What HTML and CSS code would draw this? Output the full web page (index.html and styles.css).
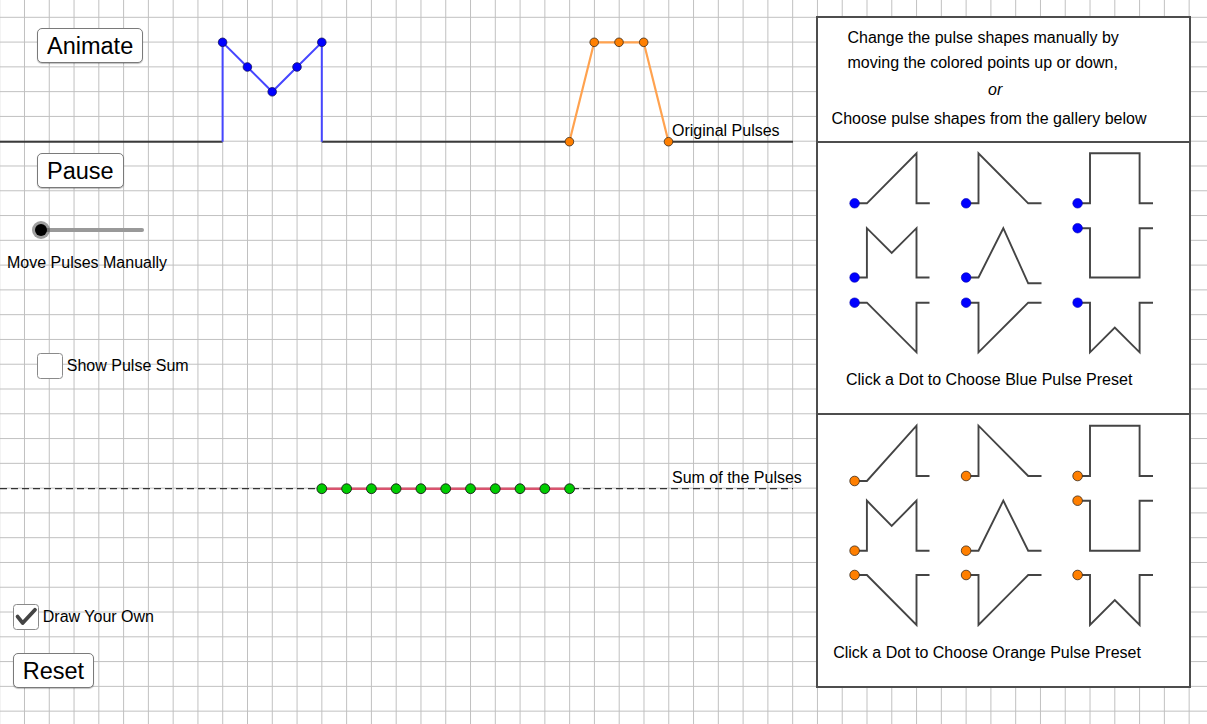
FILE: index.html
```html
<!DOCTYPE html>
<html lang="en">
<head>
<meta charset="utf-8">
<title>Pulse Superposition</title>
<link rel="stylesheet" href="styles.css">
</head>
<body>
<div class="applet">
  <svg class="canvas" width="1207" height="724" viewBox="0 0 1207 724">
    <defs>
      <pattern id="grid" width="24.78" height="24.78" patternUnits="userSpaceOnUse" x="-12.69" y="4.91">
        <path d="M12.39 0V24.78M0 12.39H24.78" stroke="#c0c0c0" stroke-width="1" fill="none"/>
      </pattern>
    </defs>
    <rect x="0" y="0" width="1207" height="724" fill="#fff"/>
    <rect x="0" y="0" width="1207" height="724" fill="url(#grid)"/>

    <!-- original pulses axis -->
    <path class="axis" d="M0 141.7H222.6M321.8 141.7H569.4M668.5 141.7H793"/>
    <polyline class="blue-line" points="222.6,141.7 222.6,42.3 247.4,67 272.2,91.8 297,67 321.8,42.3 321.8,141.7"/>
    <polyline class="orange-line" points="569.4,141.7 594.2,42.3 619,42.3 643.7,42.3 668.5,141.7"/>
    <g class="blue-dot">
      <circle cx="222.6" cy="42.3" r="4.3"/>
      <circle cx="247.4" cy="67" r="4.3"/>
      <circle cx="272.2" cy="91.8" r="4.3"/>
      <circle cx="297" cy="67" r="4.3"/>
      <circle cx="321.8" cy="42.3" r="4.3"/>
    </g>
    <g class="orange-dot">
      <circle cx="569.4" cy="141.7" r="4.3"/>
      <circle cx="594.2" cy="42.3" r="4.3"/>
      <circle cx="619" cy="42.3" r="4.3"/>
      <circle cx="643.7" cy="42.3" r="4.3"/>
      <circle cx="668.5" cy="141.7" r="4.3"/>
    </g>
    <text class="label" x="672" y="136">Original Pulses</text>

    <!-- sum of pulses -->
    <path class="dashed" d="M0 488.7H793"/>
    <path class="sum-line" d="M321.8 488.7H569.6"/>
    <g class="green-dot">
      <circle cx="321.8" cy="488.7" r="4.9"/>
      <circle cx="346.6" cy="488.7" r="4.9"/>
      <circle cx="371.4" cy="488.7" r="4.9"/>
      <circle cx="396.1" cy="488.7" r="4.9"/>
      <circle cx="420.9" cy="488.7" r="4.9"/>
      <circle cx="445.7" cy="488.7" r="4.9"/>
      <circle cx="470.5" cy="488.7" r="4.9"/>
      <circle cx="495.3" cy="488.7" r="4.9"/>
      <circle cx="520" cy="488.7" r="4.9"/>
      <circle cx="544.8" cy="488.7" r="4.9"/>
      <circle cx="569.6" cy="488.7" r="4.9"/>
    </g>
    <text class="label" x="672" y="482.7">Sum of the Pulses</text>
  </svg>

  <div class="controls">
    <button class="btn btn-animate" type="button">Animate</button>
    <button class="btn btn-pause" type="button">Pause</button>
    <div class="slider"><span class="track"></span><span class="knob"></span></div>
    <div class="slider-label">Move Pulses Manually</div>
    <label class="check check-sum"><span class="box"></span>Show Pulse Sum</label>
    <label class="check check-draw"><span class="box"><svg width="24" height="24" viewBox="0 0 24 24"><path d="M3.6 11.6L8.7 18L21 4.8" fill="none" stroke="#444" stroke-width="3.8" stroke-linecap="round" stroke-linejoin="round"/></svg></span>Draw Your Own</label>
    <button class="btn btn-reset" type="button">Reset</button>
  </div>

  <aside class="panel">
    <section class="intro">
      <p class="line1">Change the pulse shapes manually by</p>
      <p class="line2">moving the colored points up or down,</p>
      <p class="line3"><em>or</em></p>
      <p class="line4">Choose pulse shapes from the gallery below</p>
    </section>

    <section class="preset preset-blue">
      <svg class="gallery" width="371" height="222" viewBox="818 143 371 222">
        <g class="shape">
          <path d="M854.6 203.3H866.9L916.5 153.3V203.3H929.8"/>
          <path d="M966.1 203.3H978.5V153.3L1028.2 203.3H1041.5"/>
          <path d="M1077.6 203.3H1090V153.3H1139.6V203.3H1153"/>
          <path d="M854.6 277.5H866.9V228.2L891.7 252.8L916.5 228.2V277.5H929.5"/>
          <path d="M966.1 277.5H978.5L1003.3 228.2L1028.2 283.3H1041.5"/>
          <path d="M1077.6 228.2H1090V277.5H1139.6V228.2H1153"/>
          <path d="M854.6 302.7H866.9L916.5 352.3V302.7H929.5"/>
          <path d="M966.1 302.7H978.5V352.3L1028.2 302.7H1041.5"/>
          <path d="M1077.6 302.7H1090V352.3L1114.8 327.5L1139.6 352.3V302.7H1153"/>
        </g>
        <g class="gblue">
          <circle cx="854.6" cy="203.3" r="4.8"/>
          <circle cx="966.1" cy="203.3" r="4.8"/>
          <circle cx="1077.6" cy="203.3" r="4.8"/>
          <circle cx="854.6" cy="277.5" r="4.8"/>
          <circle cx="966.1" cy="277.5" r="4.8"/>
          <circle cx="1077.6" cy="228.2" r="4.8"/>
          <circle cx="854.6" cy="302.7" r="4.8"/>
          <circle cx="966.1" cy="302.7" r="4.8"/>
          <circle cx="1077.6" cy="302.7" r="4.8"/>
        </g>
      </svg>
      <p class="caption caption-blue">Click a Dot to Choose Blue Pulse Preset</p>
    </section>

    <section class="preset preset-orange">
      <svg class="gallery" width="371" height="222" viewBox="818 415 371 222">
        <g class="shape">
          <path d="M854.6 481H866.9L916.5 425.7V476H929.5"/>
          <path d="M966.1 476H978.5V425.7L1028.2 476H1041.5"/>
          <path d="M1077.6 476H1090V425.7H1139.6V476H1153"/>
          <path d="M854.6 550.7H866.9V500.7L891.7 526L916.5 500.7V550.7H929.5"/>
          <path d="M966.1 550.7H978.5L1003.3 500.7L1028.2 550.7H1041.5"/>
          <path d="M1077.6 500.7H1090V550.7H1139.6V500.7H1153"/>
          <path d="M854.6 575H866.9L916.5 625V575H929.5"/>
          <path d="M966.1 575H978.5V625L1028.2 575H1041.5"/>
          <path d="M1077.6 575H1090V625L1114.8 600L1139.6 625V575H1153"/>
        </g>
        <g class="gorange">
          <circle cx="854.6" cy="481" r="4.8"/>
          <circle cx="966.1" cy="476" r="4.8"/>
          <circle cx="1077.6" cy="476" r="4.8"/>
          <circle cx="854.6" cy="550.7" r="4.8"/>
          <circle cx="966.1" cy="550.7" r="4.8"/>
          <circle cx="1077.6" cy="500.7" r="4.8"/>
          <circle cx="854.6" cy="575" r="4.8"/>
          <circle cx="966.1" cy="575" r="4.8"/>
          <circle cx="1077.6" cy="575" r="4.8"/>
        </g>
      </svg>
      <p class="caption caption-orange">Click a Dot to Choose Orange Pulse Preset</p>
    </section>
  </aside>
</div>
</body>
</html>
```

FILE: styles.css
```css
html, body {
  margin: 0;
  padding: 0;
  background: #fff;
}

.applet {
  position: relative;
  width: 1207px;
  height: 724px;
  overflow: hidden;
  display: flex;
  justify-content: space-between;
  align-items: flex-start;
  font-family: "Liberation Sans", Arial, sans-serif;
  color: #000;
}

/* free drawing canvas */
.canvas {
  position: absolute;
  left: 0;
  top: 0;
  display: block;
}

.axis {
  stroke: #3a3a3a;
  stroke-width: 2;
  fill: none;
}

.blue-line {
  stroke: #4646ff;
  stroke-width: 2;
  fill: none;
}

.orange-line {
  stroke: #ffa24f;
  stroke-width: 2.2;
  fill: none;
}

.blue-dot circle {
  fill: #0000ff;
  stroke: #101060;
  stroke-width: 0.8;
}

.orange-dot circle {
  fill: #ff7f00;
  stroke: #3a2a1a;
  stroke-width: 0.8;
}

.green-dot circle {
  fill: #00cc00;
  stroke: #1a1a1a;
  stroke-width: 0.9;
}

.dashed {
  stroke: #333;
  stroke-width: 1.2;
  stroke-dasharray: 7 4;
  fill: none;
}

.sum-line {
  stroke: #d9546e;
  stroke-width: 2.4;
  fill: none;
}

.label {
  font-family: "Liberation Sans", Arial, sans-serif;
  font-size: 16px;
  fill: #000;
}

/* left controls */
.controls {
  position: relative;
  display: flex;
  flex-direction: column;
  align-items: flex-start;
}

.btn {
  font-family: "Liberation Sans", Arial, sans-serif;
  font-size: 23.5px;
  line-height: 33px;
  height: 35px;
  padding: 1px 9px 0;
  border: 1px solid #7a7a7a;
  border-radius: 5px;
  background: #fff;
  color: #000;
  box-shadow: 0 1px 1px rgba(0, 0, 0, 0.25);
  box-sizing: border-box;
  margin: 0;
}

.btn-animate {
  margin: 28px 0 0 37px;
}

.btn-pause {
  margin: 90px 0 0 37px;
}

.slider {
  position: relative;
  width: 112px;
  height: 18px;
  margin: 33px 0 0 31.6px;
}

.track {
  position: absolute;
  left: 9px;
  right: 0;
  top: 6.8px;
  height: 4.5px;
  border-radius: 2.5px;
  background: #999;
}

.knob {
  position: absolute;
  left: 0;
  top: 0;
  width: 18px;
  height: 18px;
  border-radius: 50%;
  background: rgba(80, 80, 80, 0.55);
}

.knob::after {
  content: "";
  position: absolute;
  left: 3px;
  top: 3px;
  width: 12px;
  height: 12px;
  border-radius: 50%;
  background: #000;
}

.slider-label {
  font-size: 16px;
  line-height: 20px;
  margin: 13.8px 0 0 7px;
}

.check {
  display: flex;
  align-items: center;
  gap: 3.5px;
  font-size: 16px;
  line-height: 20px;
}

.box {
  width: 26.6px;
  height: 26.6px;
  box-sizing: border-box;
  border: 1.3px solid #8a8a8a;
  border-radius: 3.5px;
  background: #fff;
  display: flex;
  align-items: center;
  justify-content: center;
}

.box svg {
  display: block;
}

.check-sum {
  margin: 80px 0 0 36.7px;
}

.check-draw {
  margin: 224.4px 0 0 12.7px;
}

.btn-reset {
  margin: 22.6px 0 0 12.7px;
}

/* right panel */
.panel {
  position: relative;
  margin: 16px 16px 0 0;
  width: 375px;
  height: 672px;
  box-sizing: border-box;
  border: 2px solid #4d4d4d;
  background: #fff;
  display: flex;
  flex-direction: column;
}

.panel p {
  margin: 0;
  font-size: 16px;
  line-height: 20px;
  height: 20px;
  white-space: nowrap;
}

.intro {
  height: 123px;
  border-bottom: 2px solid #4d4d4d;
}

.intro .line1 { margin: 9.8px 0 0 29.5px; }
.intro .line2 { margin: 5.7px 0 0 29.5px; }
.intro .line3 { margin: 6.3px 0 0 170px; }
.intro .line4 { margin: 9px 0 0 13.6px; }

.preset {
  height: 270px;
  border-bottom: 2px solid #4d4d4d;
}

.preset-orange {
  height: 271px;
  border-bottom: none;
}

.gallery {
  display: block;
}

.shape path {
  fill: none;
  stroke: #444;
  stroke-width: 1.9;
  stroke-linejoin: miter;
}

.gblue circle {
  fill: #0000ff;
  stroke: #0000b0;
  stroke-width: 0.6;
}

.gorange circle {
  fill: #ff7f00;
  stroke: #3a2a1a;
  stroke-width: 0.8;
}

.panel .caption-blue {
  margin: 4.5px 0 0 28px;
}

.panel .caption-orange {
  margin: 5.6px 0 0 15.2px;
}
```
